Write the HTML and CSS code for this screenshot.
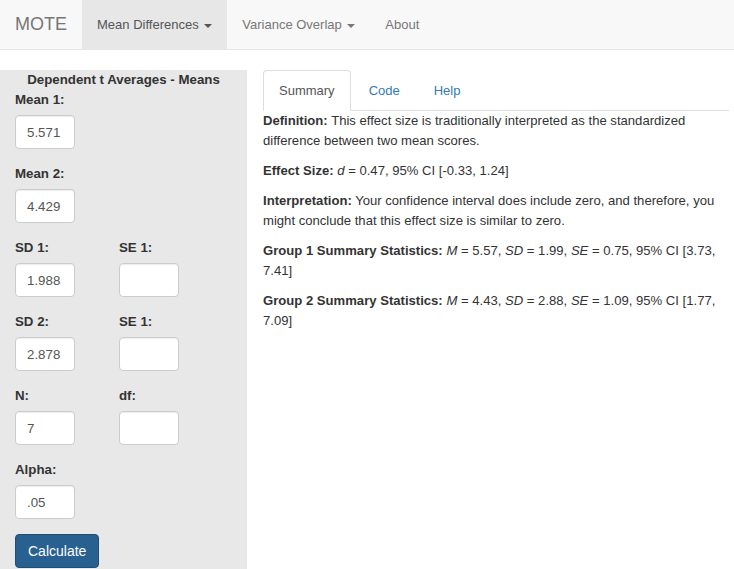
FILE: index.html
```html
<!DOCTYPE html>
<html>
<head>
<meta charset="utf-8">
<link rel="stylesheet" href="styles.css">
</head>
<body>
<nav class="navbar">
  <span class="brand">MOTE</span>
  <ul class="nav">
    <li class="active">Mean Differences <span class="caret"></span></li>
    <li>Variance Overlap <span class="caret"></span></li>
    <li>About</li>
  </ul>
</nav>
<div class="layout">
  <aside class="sidebar">
    <h4 class="side-title">Dependent t Averages - Means</h4>
    <div class="group">
      <label>Mean 1:</label>
      <input class="field" type="text" value="5.571">
    </div>
    <div class="group">
      <label>Mean 2:</label>
      <input class="field" type="text" value="4.429">
    </div>
    <div class="pair">
      <div class="group">
        <label>SD 1:</label>
        <input class="field" type="text" value="1.988">
      </div>
      <div class="group">
        <label>SE 1:</label>
        <input class="field" type="text" value="">
      </div>
      <div class="group">
        <label>SD 2:</label>
        <input class="field" type="text" value="2.878">
      </div>
      <div class="group">
        <label>SE 1:</label>
        <input class="field" type="text" value="">
      </div>
      <div class="group">
        <label>N:</label>
        <input class="field" type="text" value="7">
      </div>
      <div class="group">
        <label>df:</label>
        <input class="field" type="text" value="">
      </div>
    </div>
    <div class="group">
      <label>Alpha:</label>
      <input class="field" type="text" value=".05">
    </div>
    <button class="btn">Calculate</button>
  </aside>
  <main class="main">
    <ul class="tabs">
      <li class="tab active">Summary</li>
      <li class="tab">Code</li>
      <li class="tab">Help</li>
    </ul>
    <div class="content">
      <p><b>Definition:</b> This effect size is traditionally interpreted as the standardized difference between two mean scores.</p>
      <p><b>Effect Size:</b> <i>d</i> = 0.47, 95% CI [-0.33, 1.24]</p>
      <p><b>Interpretation:</b> Your confidence interval does include zero, and therefore, you might conclude that this effect size is similar to zero.</p>
      <p><b>Group 1 Summary Statistics:</b> <i>M</i> = 5.57, <i>SD</i> = 1.99, <i>SE</i> = 0.75, 95% CI [3.73, 7.41]</p>
      <p><b>Group 2 Summary Statistics:</b> <i>M</i> = 4.43, <i>SD</i> = 2.88, <i>SE</i> = 1.09, 95% CI [1.77, 7.09]</p>
    </div>
  </main>
</div>
</body>
</html>
```
FILE: styles.css
```css
* { box-sizing: border-box; }
html, body { margin: 0; padding: 0; }
body {
  font-family: "Liberation Sans", Arial, sans-serif;
  font-size: 13.1px;
  line-height: 20px;
  color: #333;
  background: #fff;
  overflow: hidden;
}
.navbar {
  height: 50px;
  background: #f8f8f8;
  border-bottom: 1px solid #e7e7e7;
  display: flex;
  align-items: stretch;
}
.brand {
  font-size: 18px;
  color: #777;
  padding: 15px;
  line-height: 19px;
}
.nav {
  list-style: none;
  margin: 0;
  padding: 0;
  display: flex;
}
.nav li {
  padding: 15px;
  color: #777;
  font-size: 13px;
  line-height: 19px;
}
.nav li.active {
  background: #e7e7e7;
  color: #555;
}
.caret {
  display: inline-block;
  width: 0;
  height: 0;
  margin-left: 2px;
  vertical-align: middle;
  border-top: 4px solid;
  border-right: 4px solid transparent;
  border-left: 4px solid transparent;
}
.layout {
  display: flex;
  margin-top: 20px;
  gap: 16px;
}
.sidebar {
  width: 247px;
  flex: none;
  background: #e8e8e8;
  padding: 0 15px 20px 15px;
}
.side-title {
  margin: 0;
  text-align: center;
  font-size: 13.3px;
  font-weight: bold;
  line-height: 20px;
}
.group {
  margin-bottom: 15px;
}
.group label {
  display: block;
  font-weight: bold;
  font-size: 13.3px;
  margin-bottom: 5px;
  line-height: 20px;
}
.field {
  display: block;
  width: 60px;
  height: 34px;
  padding: 6px 11px;
  font-family: "Liberation Sans", Arial, sans-serif;
  font-size: 13.3px;
  color: #555;
  background: #fff;
  border: 1px solid #ccc;
  border-radius: 4px;
  box-shadow: inset 0 1px 1px rgba(0,0,0,.075);
}
.pair {
  display: grid;
  grid-template-columns: 104px 104px;
}
.btn {
  display: block;
  height: 34px;
  padding: 6px 12px;
  font-family: "Liberation Sans", Arial, sans-serif;
  font-size: 14px;
  line-height: 20px;
  color: #fff;
  background: #286090;
  border: 1px solid #204d74;
  border-radius: 4px;
}
.main {
  width: 466px;
  flex: none;
}
.tabs {
  list-style: none;
  margin: 0;
  padding: 0;
  display: flex;
  border-bottom: 1px solid #ddd;
}
.tab {
  padding: 10px 15px;
  margin-right: 2px;
  margin-bottom: -1px;
  color: #337ab7;
  font-size: 13px;
  border: 1px solid transparent;
  border-radius: 4px 4px 0 0;
  line-height: 19px;
}
.tab.active {
  color: #555;
  background: #fff;
  border-color: #ddd #ddd transparent #ddd;
}
.content p {
  margin: 0 0 10px 0;
}
```
